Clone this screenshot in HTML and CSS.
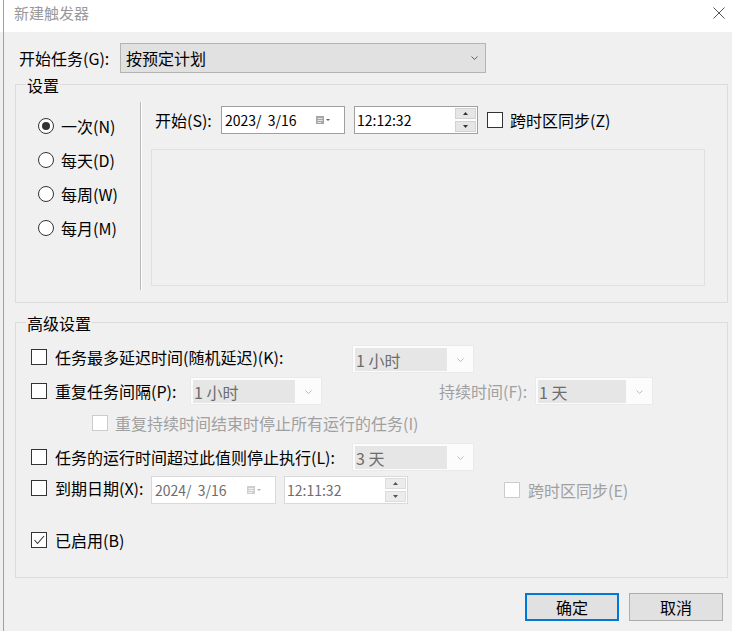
FILE: index.html
```html
<!DOCTYPE html>
<html lang="zh-CN">
<head>
<meta charset="utf-8">
<title>新建触发器</title>
<link rel="stylesheet" href="styles.css">
</head>
<body>
<div class="screen">
  <div class="edge"></div>
  <div class="dialog">
    <div class="titlebar">
      <span class="title">新建触发器</span>
      <svg class="close" width="12" height="12" viewBox="0 0 12 12"><path d="M0.5 0.5L11.5 11.5M11.5 0.5L0.5 11.5" stroke="#555" stroke-width="1" fill="none"/></svg>
    </div>
    <div class="body">
      <div class="begin-row">
        <span class="begin-label">开始任务(G):</span>
        <div class="combo main">
          <span class="combo-text">按预定计划</span>
          <svg class="chev" width="7" height="4" viewBox="0 0 7 4"><path d="M0.5 0.5L3.5 3.5L6.5 0.5" stroke="#606060" fill="none"/></svg>
        </div>
      </div>

      <div class="group g1">
        <div class="group-title">设置</div>
        <div class="g1-inner">
          <div class="radios">
            <div class="radio-row"><span class="radio on"></span><span>一次(N)</span></div>
            <div class="radio-row"><span class="radio"></span><span>每天(D)</span></div>
            <div class="radio-row"><span class="radio"></span><span>每周(W)</span></div>
            <div class="radio-row"><span class="radio"></span><span>每月(M)</span></div>
          </div>
          <div class="sep"></div>
          <div class="right">
            <div class="start-row">
              <span class="start-label">开始(S):</span>
              <div class="edit date">
                <span class="val">2023/  3/16</span>
                <svg class="cal" width="16" height="10" viewBox="0 0 16 10"><rect x="0" y="1" width="8" height="8" fill="#a6a6a6"/><path d="M1.5 3.5H6.5M1.5 5.5H6.5M1.5 7.5H5" stroke="#e6e6e6" stroke-width="1"/><path d="M10 4L14 4L12 6Z" fill="#606060"/></svg>
              </div>
              <div class="edit time">
                <span class="val">12:12:32</span>
                <div class="spin">
                  <span class="sb"><svg width="5" height="3" viewBox="0 0 5 3"><path d="M0 3L2.5 0L5 3Z" fill="#333"/></svg></span>
                  <span class="sb"><svg width="5" height="3" viewBox="0 0 5 3"><path d="M0 0L5 0L2.5 3Z" fill="#333"/></svg></span>
                </div>
              </div>
              <span class="cb"></span>
              <span class="cb-label">跨时区同步(Z)</span>
            </div>
            <div class="panel"></div>
          </div>
        </div>
      </div>

      <div class="group g2">
        <div class="group-title">高级设置</div>
        <div class="rows">
          <div class="row r1">
            <div class="chk up"><span class="cb"></span><span class="lbl w297">任务最多延迟时间(随机延迟)(K):</span></div>
            <div class="combo dis w122"><span class="combo-val">1 小时</span><span class="chev-box"><svg width="7" height="4" viewBox="0 0 7 4"><path d="M0.5 0.5L3.5 3.5L6.5 0.5" stroke="#bdbdbd" fill="none"/></svg></span></div>
          </div>
          <div class="row r2">
            <div class="chk"><span class="cb"></span><span class="lbl w135">重复任务间隔(P):</span></div>
            <div class="combo dis w132"><span class="combo-val">1 小时</span><span class="chev-box"><svg width="7" height="4" viewBox="0 0 7 4"><path d="M0.5 0.5L3.5 3.5L6.5 0.5" stroke="#bdbdbd" fill="none"/></svg></span></div>
            <span class="lbl dim dur">持续时间(F):</span>
            <div class="combo dis w118"><span class="combo-val">1 天</span><span class="chev-box"><svg width="7" height="4" viewBox="0 0 7 4"><path d="M0.5 0.5L3.5 3.5L6.5 0.5" stroke="#bdbdbd" fill="none"/></svg></span></div>
          </div>
          <div class="row r3">
            <span class="cb off"></span>
            <span class="lbl dim">重复持续时间结束时停止所有运行的任务(I)</span>
          </div>
          <div class="row r4">
            <div class="chk"><span class="cb"></span><span class="lbl w297">任务的运行时间超过此值则停止执行(L):</span></div>
            <div class="combo dis w122"><span class="combo-val">3 天</span><span class="chev-box"><svg width="7" height="4" viewBox="0 0 7 4"><path d="M0.5 0.5L3.5 3.5L6.5 0.5" stroke="#bdbdbd" fill="none"/></svg></span></div>
          </div>
          <div class="row r5">
            <div class="chk up"><span class="cb"></span><span class="lbl w96">到期日期(X):</span></div>
            <div class="edit date dis-edit w125">
              <span class="val">2024/  3/16</span>
              <svg class="cal" width="16" height="10" viewBox="0 0 16 10"><rect x="0" y="1" width="8" height="8" fill="#cfcfcf"/><path d="M1.5 3.5H6.5M1.5 5.5H6.5M1.5 7.5H5" stroke="#f2f2f2" stroke-width="1"/><path d="M10 4L14 4L12 6Z" fill="#b0b0b0"/></svg>
            </div>
            <div class="edit time dis-edit">
              <span class="val">12:11:32</span>
              <div class="spin">
                <span class="sb"><svg width="5" height="3" viewBox="0 0 5 3"><path d="M0 3L2.5 0L5 3Z" fill="#555"/></svg></span>
                <span class="sb"><svg width="5" height="3" viewBox="0 0 5 3"><path d="M0 0L5 0L2.5 3Z" fill="#555"/></svg></span>
              </div>
            </div>
            <div class="chk tz2"><span class="cb off"></span><span class="lbl dim">跨时区同步(E)</span></div>
          </div>
          <div class="row r6">
            <div class="chk"><span class="cb checked"><svg width="14" height="14" viewBox="0 0 14 14"><path d="M2.5 7L5.5 10.5L12 3" stroke="#333" stroke-width="1.1" fill="none"/></svg></span><span class="lbl">已启用(B)</span></div>
          </div>
        </div>
      </div>

      <div class="buttons">
        <button class="btn primary">确定</button>
        <button class="btn">取消</button>
      </div>
    </div>
  </div>
</div>
</body>
</html>
```
FILE: styles.css
```css
* { box-sizing: border-box; }
html, body { margin: 0; padding: 0; }
body {
  width: 732px;
  height: 631px;
  overflow: hidden;
  font-family: "Noto Sans CJK SC", "Noto Sans", sans-serif;
  font-size: 16px;
  line-height: 20px;
  color: #000;
  background: #f0f0f0;
}
.screen { display: flex; height: 631px; }
.edge {
  width: 4px;
  flex: none;
  background: linear-gradient(#fff 0 32px, #f0f0f0 32px);
  border-right: 1px solid #a0a0a0;
}
.dialog { flex: 1; display: flex; flex-direction: column; min-width: 0; }
.titlebar {
  height: 32px;
  flex: none;
  background: #fff;
  display: flex;
  justify-content: space-between;
  align-items: flex-start;
  padding: 3px 7px 0 10px;
}
.title { font-size: 15px; line-height: 20px; color: #999; }
.close { margin-top: 4px; display: block; }

.body {
  flex: 1;
  display: flex;
  flex-direction: column;
  padding: 11px 4px 0 11px;
}
.begin-row { display: flex; align-items: center; height: 30px; padding-left: 4px; flex: none; }
.begin-label { width: 101px; flex: none; }

.combo { display: flex; align-items: center; flex: none; }
.combo.main {
  width: 366px;
  height: 30px;
  background: #e1e1e1;
  border: 1px solid #b4b4b4;
  padding: 0 7px 0 5px;
  justify-content: space-between;
}
.chev { display: block; }

.group {
  border: 1px solid #dcdcdc;
  flex: none;
  display: flex;
  flex-direction: column;
}
.group-title {
  align-self: flex-start;
  margin: -10px 0 0 10px;
  padding: 0 1px;
  background: #f0f0f0;
  line-height: 20px;
}
.g1 { margin-top: 11px; }
.g1-inner { display: flex; padding: 7px 0 12px 0; }
.radios {
  width: 124px;
  flex: none;
  display: flex;
  flex-direction: column;
  padding: 7px 0 0 22px;
}
.radio-row { display: flex; align-items: center; height: 34px; gap: 7px; }
.radio {
  width: 16px;
  height: 16px;
  border: 1px solid #333;
  border-radius: 50%;
  background: #fff;
  display: flex;
  align-items: center;
  justify-content: center;
  flex: none;
}
.radio.on::after {
  content: "";
  width: 8px;
  height: 8px;
  border-radius: 50%;
  background: #333;
}
.sep {
  width: 2px;
  height: 188px;
  flex: none;
  border-left: 1px solid #b9b9b9;
  border-right: 1px solid #fff;
}
.right { display: flex; flex-direction: column; padding: 4px 0 0 9px; }
.start-row { display: flex; align-items: center; height: 28px; padding-left: 4px; }
.start-label { width: 66px; flex: none; }

.edit {
  height: 28px;
  width: 124px;
  flex: none;
  background: #fff;
  border: 1px solid #a0a0a0;
  display: flex;
  align-items: center;
  justify-content: space-between;
  font-size: 14px;
}
.edit .val { white-space: pre; }
.edit.date { padding: 0 12px 0 3px; }
.edit.time { padding: 0 1px 0 2px; margin-left: 9px; }
.cal { display: block; }
.spin { display: flex; flex-direction: column; gap: 2px; }
.sb {
  width: 21px;
  height: 11px;
  background: #e6e6e6;
  border: 1px solid #d2d2d2;
  display: flex;
  align-items: center;
  justify-content: center;
}
.sb svg { display: block; }

.cb {
  width: 16px;
  height: 16px;
  flex: none;
  border: 1px solid #333;
  background: #fff;
  display: flex;
  align-items: center;
  justify-content: center;
}
.cb.off { border-color: #cccccc; }
.start-row .cb { margin-left: 9px; }
.cb-label { margin-left: 7px; }

.panel {
  margin-top: 15px;
  width: 554px;
  height: 137px;
  border: 1px solid #e0e0e0;
  background: #f0f0f0;
}

.g2 { margin-top: 19px; }
.rows { display: flex; flex-direction: column; padding: 12px 0 23px 15px; }
.row { display: flex; align-items: center; height: 28px; }
.r2, .r3 { margin-top: 4px; }
.r4 { margin-top: 6px; }
.r5 { margin-top: 5px; }
.r6 { margin-top: 22px; }
.chk { display: flex; align-items: center; gap: 8px; flex: none; }
.chk.up { margin-bottom: 4px; }
.lbl { flex: none; white-space: nowrap; }
.w297 { width: 297px; }
.w135 { width: 135px; }
.w96 { width: 96px; }
.dim { color: #a0a0a0; }
.r3 .cb { margin-left: 61px; }
.r3 .lbl { margin-left: 7px; }
.dur { margin-left: 117px; width: 96px; }

.combo.dis {
  height: 28px;
  background: #fcfcfc;
  border: 1px solid #eaeaea;
  padding: 2px 0 1px 2px;
  align-items: stretch;
}
.w122 { width: 122px; }
.w132 { width: 132px; }
.w118 { width: 118px; }
.w125 { width: 125px; }
.combo-val {
  flex: 1;
  background: #e6e6e6;
  color: #6d6d6d;
  padding-left: 1px;
  display: flex;
  align-items: center;
}
.chev-box { width: 26px; flex: none; display: flex; align-items: center; justify-content: center; }
.chev-box svg { display: block; }

.dis-edit { border-color: #d9d9d9; color: #6d6d6d; }
.r5 .edit.time { margin-left: 8px; }
.r5 .sb { background: #ececec; border-color: #dcdcdc; }
.tz2 { margin-left: 96px; }

.buttons {
  display: flex;
  justify-content: flex-end;
  gap: 10px;
  margin-top: 15px;
  padding-right: 5px;
}
.btn {
  width: 94px;
  height: 28px;
  background: #e1e1e1;
  border: 1px solid #adadad;
  font-family: inherit;
  font-size: 16px;
  line-height: 20px;
  color: #000;
  padding: 0;
  margin: 0;
}
.btn.primary { border: 2px solid #0078d7; }
```
